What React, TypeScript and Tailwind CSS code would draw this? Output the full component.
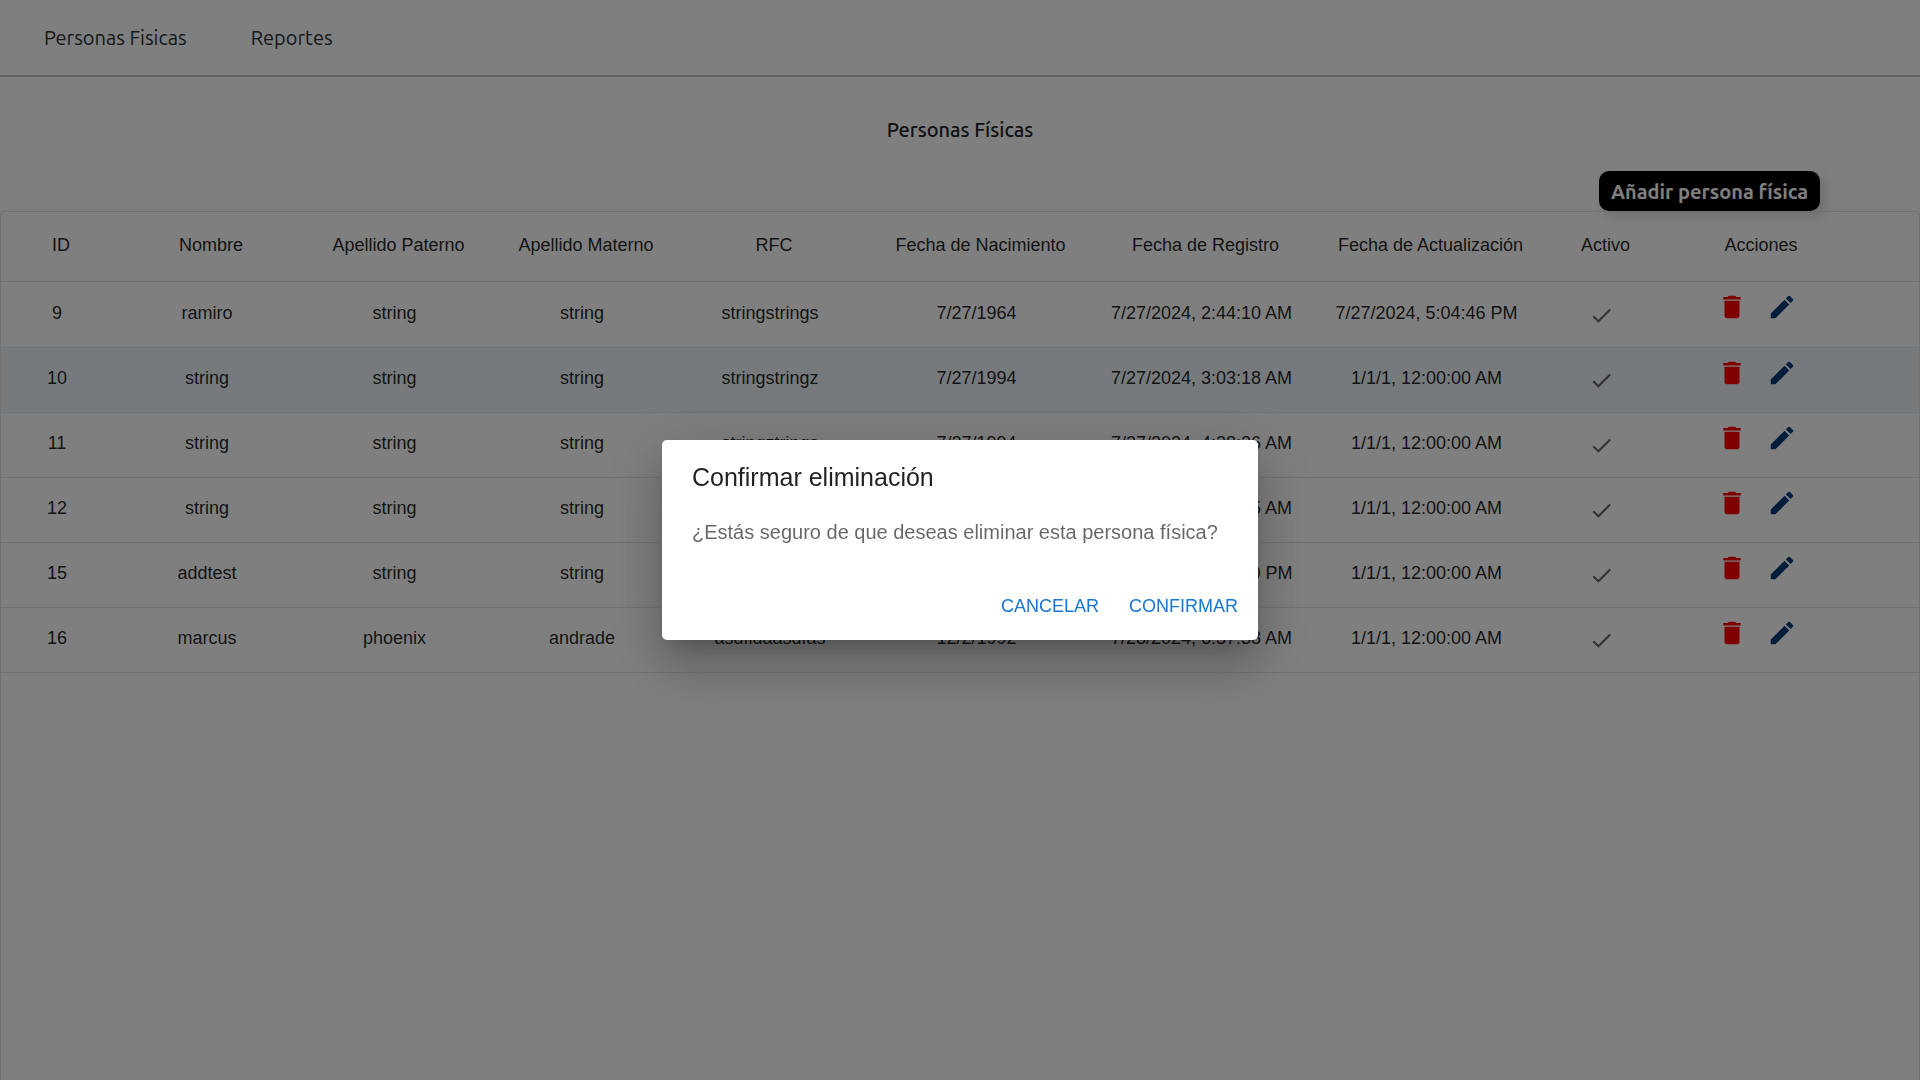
const people = [
  ['9', 'ramiro', 'string', 'string', 'stringstrings', '7/27/1964', '7/27/2024, 2:44:10 AM', '7/27/2024, 5:04:46 PM'],
  ['10', 'string', 'string', 'string', 'stringstringz', '7/27/1994', '7/27/2024, 3:03:18 AM', '1/1/1, 12:00:00 AM'],
  ['11', 'string', 'string', 'string', 'stringztrings', '7/27/1994', '7/27/2024, 4:28:26 AM', '1/1/1, 12:00:00 AM'],
  ['12', 'string', 'string', 'string', 'stringztringz', '7/27/1994', '7/27/2024, 4:30:15 AM', '1/1/1, 12:00:00 AM'],
  ['15', 'addtest', 'string', 'string', 'stringaddtest', '7/27/1994', '7/27/2024, 5:02:10 PM', '1/1/1, 12:00:00 AM'],
  ['16', 'marcus', 'phoenix', 'andrade', 'asdfidaasdfas', '12/2/1992', '7/28/2024, 6:37:38 AM', '1/1/1, 12:00:00 AM'],
];

const headers = [
  'ID', 'Nombre', 'Apellido Paterno', 'Apellido Materno', 'RFC', 'Fecha de Nacimiento',
  'Fecha de Registro', 'Fecha de Actualización', 'Activo', 'Acciones',
];

const columnWidths = [
  'w-[112px]', 'w-[188px]', 'w-[187px]', 'w-[188px]', 'w-[188px]', 'w-[225px]',
  'w-[225px]', 'w-[225px]', 'w-[125px]', 'w-[186px]',
];

function Nav() {
  return (
    <nav className="flex h-[77px] items-center gap-16 border-b-2 border-[#c0c0c0] px-11 text-[20px] text-[#2b3035]">
      <a href="#personas">Personas Fisicas</a>
      <a href="#reportes">Reportes</a>
    </nav>
  );
}

function RowActions() {
  return (
    <div className="flex justify-center gap-5 pb-3.5">
      <button type="button" aria-label="Eliminar" className="text-[#ff0000]">
        <svg viewBox="0 0 24 24" className="size-[30px]" fill="currentColor">
          <path d="M6 19c0 1.1.9 2 2 2h8c1.1 0 2-.9 2-2V7H6zM19 4h-3.5l-1-1h-5l-1 1H5v2h14z" />
        </svg>
      </button>
      <button type="button" aria-label="Editar" className="text-[#003a78]">
        <svg viewBox="0 0 24 24" className="size-[30px]" fill="currentColor">
          <path d="M3 17.25V21h3.75L17.81 9.94l-3.75-3.75zM20.71 7.04c.39-.39.39-1.02 0-1.41l-2.34-2.34a.9959.9959 0 0 0-1.41 0l-1.83 1.83 3.75 3.75z" />
        </svg>
      </button>
    </div>
  );
}

function PeopleTable() {
  return (
    <div className="flex-1 overflow-hidden rounded-t-[5px] border border-b-0 border-[#e0e0e0]">
      <table className="w-full table-fixed border-collapse whitespace-nowrap text-center font-['Liberation_Sans',sans-serif] text-[18px] leading-[26px] text-black/87">
        <colgroup>
          {columnWidths.map((width, i) => (
            <col key={i} className={width} />
          ))}
          <col />
        </colgroup>
        <thead>
          <tr className="h-[69px] border-b border-[#e0e0e0]">
            {headers.map((header) => (
              <th key={header} scope="col" className="p-0 pb-0.5 pl-2 font-normal">{header}</th>
            ))}
            <td />
          </tr>
        </thead>
        <tbody>
          {people.map((person) => (
            <tr key={person[0]} className="h-[65px] border-b border-[#e0e0e0] first:h-[66px] nth-2:bg-[#edf4fb]">
              {person.map((value, i) => (
                <td key={i} className="p-0 pb-[3px]">{value}</td>
              ))}
              <td className="p-0 pt-0.5">
                <svg viewBox="0 0 24 24" role="img" aria-label="Sí" className="mx-auto size-[25px] text-black/60" fill="currentColor">
                  <path d="M9 16.17 4.83 12l-1.42 1.41L9 19 21 7l-1.41-1.41z" />
                </svg>
              </td>
              <td className="p-0"><RowActions /></td>
              <td />
            </tr>
          ))}
        </tbody>
      </table>
    </div>
  );
}

function ConfirmDialog() {
  return (
    <div className="fixed inset-0 flex items-center justify-center bg-black/50 font-['Liberation_Sans',sans-serif]">
      <div
        role="dialog"
        aria-modal="true"
        aria-labelledby="confirm-title"
        className="w-[596px] rounded-[5px] bg-white shadow-[0_14px_19px_-9px_rgba(0,0,0,0.2),0_30px_48px_4px_rgba(0,0,0,0.14),0_11px_58px_10px_rgba(0,0,0,0.12)]"
      >
        <h2 id="confirm-title" className="px-[30px] pt-[17px] pb-5 text-[25px] leading-10 text-black/87">
          Confirmar eliminación
        </h2>
        <p className="px-[30px] pb-[38px] text-[20px] leading-[30px] text-black/60">
          ¿Estás seguro de que deseas eliminar esta persona física?
        </p>
        <div className="flex justify-end gap-2.5 px-2.5 pb-[13px] text-[18px] leading-[30px] text-[#1976d2]">
          <button type="button" className="px-2.5 py-1.5">CANCELAR</button>
          <button type="button" className="px-2.5 py-1.5">CONFIRMAR</button>
        </div>
      </div>
    </div>
  );
}

export default function App() {
  return (
    <div className="flex min-h-screen flex-col bg-white font-[Ubuntu,'Noto_Sans',sans-serif]">
      <Nav />
      <main className="flex flex-1 flex-col">
        <h1 className="pt-[39px] text-center text-[20px] leading-7 font-medium text-[#212529]">Personas Físicas</h1>
        <div className="flex justify-end pt-[27px] pr-[100px]">
          <button type="button" className="h-10 rounded-[10px] bg-black px-3 pt-px text-[20px] font-bold text-white shadow-[5px_5px_12px_rgba(0,0,0,0.15)]">
            Añadir persona física
          </button>
        </div>
        <PeopleTable />
      </main>
      <ConfirmDialog />
    </div>
  );
}
